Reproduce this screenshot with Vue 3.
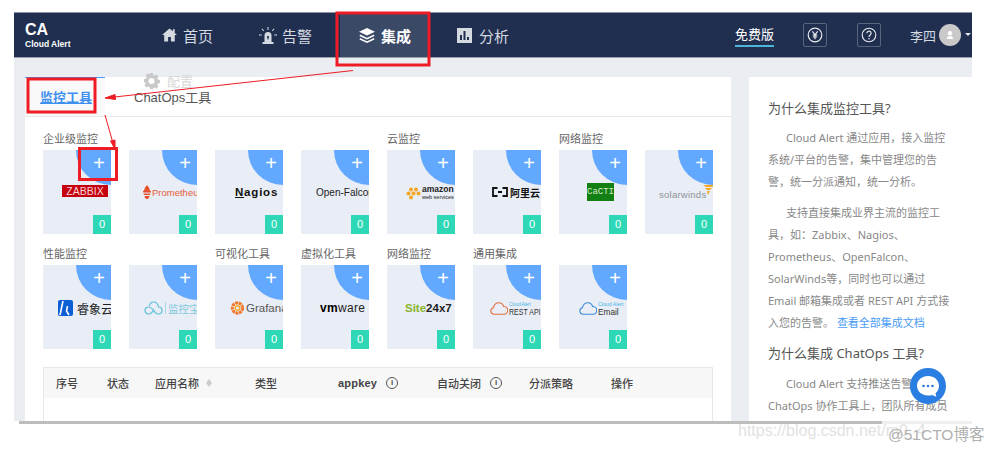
<template>
  <div class="page">
    <div class="shell">
      <header class="nav">
        <div class="brand">
          <div class="brand-ca">CA</div>
          <div class="brand-sub">Cloud Alert</div>
        </div>
        <nav class="menu">
          <a class="menu-item home">
            <svg width="15" height="14" viewBox="0 0 15 14"><path fill="#d5d9e0" d="M7.5 0.5 0 7h2.2v6.5h3.9V9h2.8v4.5h3.900V7H15L12.700 5V1.200h-1.900v2.100z"/></svg>
            首页
          </a>
          <a class="menu-item alarm">
            <svg width="18" height="17" viewBox="0 0 18 17"><path fill="#d5d9e0" d="M5.500 15V8.500a3.500 3.500 0 0 1 7 0V15zM3.500 15h11v2h-11zM8.500 0h1v3h-1zM2.500 2l.8-.6 1.800 2.300-.8.600zM15.500 2l-.8-.6-1.800 2.300.8.600zM0 7.500h2.800v1H0zM15.200 7.500H18v1h-2.800z"/><circle cx="9" cy="10" r="1.100" fill="#202f50"/><rect x="8.500" y="10" width="1" height="2.500" fill="#202f50"/></svg>
            告警
          </a>
          <a class="menu-item active">
            <svg width="16" height="15" viewBox="0 0 16 15"><path fill="#fff" d="M8 0 16 3.800 8 7.600 0 3.800z"/><path fill="none" stroke="#fff" stroke-width="1.500" d="M.8 7.200 8 10.600l7.200-3.400M.8 10.700 8 14.100l7.200-3.400"/></svg>
            集成
          </a>
          <a class="menu-item chart">
            <svg width="15" height="15" viewBox="0 0 15 15"><path fill="#d5d9e0" fill-rule="evenodd" d="M0 0h15v15H0zM3 7v5h2V7zM6.500 3v9h2V3zM10 9v3h2V9z"/></svg>
            分析
          </a>
        </nav>
        <div class="nav-right">
          <span class="plan">免费版</span>
          <span class="icon-box">
            <svg width="16" height="16" viewBox="0 0 16 16"><circle cx="8" cy="8" r="6.800" fill="none" stroke="#e8eaee" stroke-width="1.200"/><path fill="none" stroke="#e8eaee" stroke-width="1.200" d="M5.400 4.300 8 7.800l2.600-3.500M8 7.800v4.400M5.800 8.200h4.400M5.800 10h4.400"/></svg>
          </span>
          <span class="icon-box">
            <svg width="16" height="16" viewBox="0 0 16 16"><circle cx="8" cy="8" r="6.800" fill="none" stroke="#e8eaee" stroke-width="1.100"/><path fill="none" stroke="#e8eaee" stroke-width="1.200" d="M5.900 6.200a2.100 2.100 0 1 1 3.300 1.700C8.400 8.500 8 8.900 8 9.900"/><circle cx="8" cy="11.700" r=".8" fill="#e8eaee"/></svg>
          </span>
          <span class="user">李四</span>
          <span class="avatar">
            <svg width="10" height="10" viewBox="0 0 10 10"><circle cx="5" cy="3.200" r="2.200" fill="#fff"/><path fill="#fff" d="M1.800 9c0-2 1.400-3 3.200-3s3.200 1 3.200 3z"/></svg>
          </span>
          <span class="caret"></span>
        </div>
      </header>

      <main class="content">
        <section class="panel">
          <div class="tabs">
            <a class="tab tab-active">监控工具</a>
            <a class="tab">ChatOps工具</a>
          </div>
          <div class="ghost-menu">
            <svg width="17" height="16" viewBox="0 0 17 16"><path fill="#c9c9c9" fill-rule="evenodd" d="M6 0h3l.4 2 1.400.6 1.700-1.100 2 2-1.100 1.700.6 1.400 2 .4v3l-2 .4-.6 1.400 1.100 1.700-2 2-1.700-1.100-1.400.6L9 16H6l-.4-2-1.400-.6-1.700 1.100-2-2 1.100-1.700L1 9.400 0 9V6l2-.4.6-1.400-1.100-1.700 2-2 1.700 1.100L6 .6zM7.500 5a3 3 0 1 0 0 6 3 3 0 0 0 0-6z"/></svg>
            配置
          </div>

          <div v-for="(row, r) in rows" :key="r" class="group-row">
            <div v-for="group in row" :key="group.title" class="group">
              <div class="group-title">{{ group.title }}</div>
              <div class="cards">
                <div v-for="card in group.cards" :key="card" class="card">
                  <span class="corner">+</span>
                  <span class="count">0</span>

                  <div v-if="card === 'zabbix'" class="logo zabbix">ZABBIX</div>
                  <div v-else-if="card === 'prometheus'" class="logo prometheus">
                    <svg width="8" height="14" viewBox="0 0 8 14"><path fill="#e6522c" d="M4 0c.6 1.600 2.600 2.400 2.600 4.600 0 .8.400 1.400 1.400 1.400v1.500H0V6c1 0 1.400-.6 1.400-1.400C1.400 2.400 3.400 1.600 4 0zM.8 8.500h6.400v1.500H.8zM1.600 11h4.800c0 1.800-1 3-2.400 3s-2.400-1.200-2.400-3z"/></svg>
                    Prometheus
                  </div>
                  <div v-else-if="card === 'nagios'" class="logo nagios"><u>N</u>agios</div>
                  <div v-else-if="card === 'falcon'" class="logo falcon">Open-Falcon</div>
                  <div v-else-if="card === 'amazon'" class="logo amazon">
                    <svg width="15" height="15" viewBox="0 0 15 15"><g fill="#f5a623"><circle cx="5" cy="3.500" r="2"/><circle cx="10" cy="3.500" r="2"/><circle cx="2.500" cy="7.500" r="2"/><circle cx="7.500" cy="7.500" r="2"/><circle cx="12.500" cy="7.500" r="2"/><circle cx="5" cy="11.500" r="2"/></g></svg>
                    <div class="amazon-text"><b>amazon</b><small>web services</small></div>
                  </div>
                  <div v-else-if="card === 'aliyun'" class="logo aliyun">
                    <svg width="16" height="10" viewBox="0 0 16 10"><path fill="none" stroke="#111" stroke-width="1.800" d="M5.500 1H1v8h4.500M10.500 1H15v8h-4.500M6 5h4"/></svg>
                    阿里云
                  </div>
                  <div v-else-if="card === 'cacti'" class="logo cacti">CaCTI</div>
                  <div v-else-if="card === 'solarwinds'" class="logo solarwinds">
                    solarwinds
                    <svg class="solar-mark" width="12" height="11" viewBox="0 0 12 11"><path fill="#f5a623" d="M0 1h12L9 3H3zM2 4h7L7 6H4zM4 7h3L5 11z"/></svg>
                  </div>
                  <div v-else-if="card === 'ruixiang'" class="logo ruixiang">
                    <svg width="15" height="16" viewBox="0 0 15 16"><rect width="15" height="16" rx="2" fill="#0d5fd6"/><path fill="none" stroke="#fff" stroke-width="1.600" d="M5 1 3.500 8 2 15M9.500 6l-1 5 2.500 4"/></svg>
                    睿象云
                  </div>
                  <div v-else-if="card === 'jiankongbao'" class="logo jiankongbao">
                    <svg width="19" height="14" viewBox="0 0 19 14"><path fill="none" stroke="#5cc0dc" stroke-width="1.200" d="M9.500 9C8 12 6.500 13 4.500 13a3.500 3.500 0 0 1 0-7c2.500 0 3.500 1.500 5 3zm0 0c1.500 3 3 4 5 4a3.500 3.500 0 0 0 0-7c-.5-3-2-5-5-5-2.500 0-4 2-4 4"/></svg>
                    <i class="divider"></i>
                    监控宝
                  </div>
                  <div v-else-if="card === 'grafana'" class="logo grafana">
                    <svg width="15" height="16" viewBox="0 0 13 14"><circle cx="6.500" cy="7" r="4.500" fill="none" stroke="#f0762a" stroke-width="2.600" stroke-dasharray="2.500 .6"/><circle cx="6.500" cy="7" r="2" fill="none" stroke="#f5a623" stroke-width="1.200"/></svg>
                    Grafana
                  </div>
                  <div v-else-if="card === 'vmware'" class="logo vmware"><b>vm</b>ware</div>
                  <div v-else-if="card === 'site24'" class="logo site24"><span>Site</span>24x7</div>
                  <div v-else-if="card === 'rest'" class="logo cloud-logo rest">
                    <svg width="18" height="13" viewBox="0 0 18 13"><path fill="none" stroke="#e0703f" stroke-width="1.100" d="M4 12.300a3.300 3.300 0 0 1-.6-6.500C4 2.800 6.200.7 8.800.7c2.400 0 4.200 1.700 4.800 3.800a3.900 3.900 0 0 1 .4 7.800z"/></svg>
                    <div class="cloud-text"><small>Cloud Alert</small><span>REST API</span></div>
                  </div>
                  <div v-else-if="card === 'email'" class="logo cloud-logo email">
                    <svg width="18" height="13" viewBox="0 0 18 13"><path fill="none" stroke="#3d8bd8" stroke-width="1.100" d="M4 12.300a3.300 3.300 0 0 1-.6-6.500C4 2.800 6.200.7 8.800.7c2.400 0 4.200 1.700 4.800 3.800a3.900 3.900 0 0 1 .4 7.800z"/></svg>
                    <div class="cloud-text"><small>Cloud Alert</small><span>Email</span></div>
                  </div>
                </div>
              </div>
            </div>
          </div>

          <div class="table">
            <div class="table-head">
              <span class="th w-no">序号</span>
              <span class="th w-status">状态</span>
              <span class="th w-name">应用名称<i class="sort"></i></span>
              <span class="th w-type">类型</span>
              <span class="th w-key appkey">appkey<i class="info">i</i></span>
              <span class="th w-auto">自动关闭<i class="info">i</i></span>
              <span class="th w-policy">分派策略</span>
              <span class="th">操作</span>
            </div>
          </div>
        </section>

        <aside class="side">
          <h3>为什么集成监控工具?</h3>
          <p>Cloud Alert 通过应用，接入监控系统/平台的告警，集中管理您的告警，统一分派通知，统一分析。</p>
          <p>支持直接集成业界主流的监控工具，如：Zabbix、Nagios、Prometheus、OpenFalcon、SolarWinds等，同时也可以通过 Email 邮箱集成或者 REST API 方式接入您的告警。 <a>查看全部集成文档</a></p>
          <h3>为什么集成 ChatOps 工具?</h3>
          <p>Cloud Alert 支持推送告警到 ChatOps 协作工具上，团队所有成员</p>
        </aside>
      </main>
    </div>
    <div class="rule"><div class="rule-dark"></div></div>

    <!-- things drawn over the screenshot -->
    <button class="chat">
      <svg width="24" height="23" viewBox="0 0 24 23"><path fill="#fff" d="M12 1c6.200 0 11 4.200 11 9.800 0 3.300-1.300 5.800-3.500 7.500l.8 3.400-4.200-1.800c-1.300.4-2.700.6-4.100.6C5.800 20.500 1 16.300 1 10.800S5.800 1 12 1z"/><g fill="#2a7de1"><circle cx="7.500" cy="11" r="1.300"/><circle cx="12" cy="11" r="1.300"/><circle cx="16.500" cy="11" r="1.300"/></g></svg>
    </button>
    <svg class="marks" width="995" height="451" viewBox="0 0 995 451">
      <g fill="none" stroke="#ee1c25" stroke-width="3">
        <rect x="337" y="13" width="92" height="52"/>
        <rect x="28" y="79" width="67" height="33"/>
        <rect x="79.500" y="148.500" width="37" height="31"/>
      </g>
      <g stroke="#ee1c25" stroke-width="1" fill="#ee1c25">
        <path d="M353 70.500 110 97.500"/>
        <path d="M105 98 115 94.500 115.500 99.500z"/>
        <path d="M105 115 113 143"/>
        <path d="M115 149 110.500 141 115 140z"/>
      </g>
    </svg>
    <div class="watermark"><span class="wm-url">https://blog.csdn.net/m0_4</span><span class="wm-brand">@51CTO博客</span></div>
  </div>
</template>

<script setup>
// each row of the integration wall, cards are keyed to their logo below
const rows = [
  [
    { title: '企业级监控', cards: ['zabbix', 'prometheus', 'nagios', 'falcon'] },
    { title: '云监控', cards: ['amazon', 'aliyun'] },
    { title: '网络监控', cards: ['cacti', 'solarwinds'] }
  ],
  [
    { title: '性能监控', cards: ['ruixiang', 'jiankongbao'] },
    { title: '可视化工具', cards: ['grafana'] },
    { title: '虚拟化工具', cards: ['vmware'] },
    { title: '网络监控 ', cards: ['site24'] },
    { title: '通用集成', cards: ['rest', 'email'] }
  ]
]
</script>

<style>
html, body {
  background: #fff;
  overflow: hidden;
}
</style>

<style scoped>
.page {
  position: relative;
  width: 995px;
  height: 451px;
  overflow: hidden;
  background: #fff;
  font-family: "Liberation Sans", "Noto Sans CJK SC", sans-serif;
}

.shell {
  width: 958px;
  height: 409px;
  margin: 12px 0 0 14px;
  background: #eaeef3;
  overflow: hidden;
}

/* top bar */
.nav {
  display: flex;
  align-items: center;
  height: 46px;
  border-top: 1px solid #8d95a5;
  border-bottom: 1px solid #98a0ae;
  box-sizing: border-box;
  background: #202f50;
  color: #d5d9e0;
}

.brand {
  width: 148px;
  padding-left: 11px;
  box-sizing: border-box;
  color: #fff;
}

.brand-ca {
  font-size: 16px;
  font-weight: 700;
  line-height: 17px;
}

.brand-sub {
  font-size: 8.500px;
  font-weight: 700;
  line-height: 12px;
}

.menu {
  display: flex;
  align-items: stretch;
  height: 100%;
}

.menu-item {
  display: flex;
  align-items: center;
  gap: 6px;
  font-size: 15px;
  white-space: nowrap;
}

.home { width: 96px; }
.alarm { width: 80px; gap: 5px; margin-left: 1px; }
.chart { margin-left: 27px; gap: 7px; }

.active {
  justify-content: center;
  width: 90px;
  margin-left: 1px;
  background: #3a4a66;
  color: #fff;
  font-weight: 700;
}

.nav-right {
  display: flex;
  align-items: center;
  margin-left: auto;
  height: 100%;
}

.plan {
  margin-right: 29px;
  padding: 4px 0 2px;
  border-bottom: 2px solid #4db6d8;
  font-size: 13px;
  color: #fff;
  line-height: 16px;
}

.icon-box {
  display: flex;
  align-items: center;
  justify-content: center;
  width: 22px;
  height: 22px;
  margin-right: 30px;
  border: 1px solid #59647c;
  border-radius: 2px;
}

.user {
  font-size: 13px;
  margin-left: -1px;
  margin-right: 3px;
}

.avatar {
  display: flex;
  align-items: center;
  justify-content: center;
  width: 22px;
  height: 22px;
  border-radius: 50%;
  background: #c9c9c9;
}

.caret {
  width: 0;
  height: 0;
  margin: 0 1px 0 4px;
  border: 3px solid transparent;
  border-top: 3px solid #e6e8ec;
  transform: translateY(1px);
}

/* body */
.content {
  display: flex;
  gap: 18px;
  padding: 19px 0 0 11px;
}

.panel {
  position: relative;
  flex: none;
  width: 706px;
  height: 345px;
  background: #fff;
}

.tabs {
  display: flex;
  align-items: center;
  height: 39px;
  border-bottom: 1px solid #e6e8ec;
  margin-bottom: 14px;
}

.tab {
  font-size: 13px;
  color: #555;
  margin-left: 29px;
}

.tab-active {
  width: 80px;
  height: 39px;
  margin-left: 0;
  padding-left: 15px;
  box-sizing: border-box;
  line-height: 40px;
  border-top: 1px solid #4a9cf6;
  background: #f9f9f9;
  color: #3d8ff0;
  font-weight: 700;
  text-decoration: underline;
}

.ghost-menu {
  position: absolute;
  left: 119px;
  top: -6px;
  display: flex;
  align-items: center;
  gap: 6px;
  font-size: 13px;
  color: #d8d8d8;
}

.group-row {
  display: flex;
  gap: 18px;
  height: 115px;
  padding-left: 18px;
}

.group-title {
  height: 19px;
  padding-top: 1px;
  box-sizing: border-box;
  font-size: 11px;
  line-height: 14px;
  color: #666;
}

.cards {
  display: flex;
  gap: 18px;
}

.card {
  position: relative;
  display: flex;
  align-items: flex-start;
  width: 68px;
  height: 84px;
  padding-top: 33px;
  box-sizing: border-box;
  background: #e9edf5;
  overflow: hidden;
}

.corner {
  position: absolute;
  top: 0;
  right: 0;
  width: 35px;
  height: 35px;
  padding: 1px 6px 0 0;
  box-sizing: border-box;
  background: #62a8ff;
  border-bottom-left-radius: 100%;
  color: #fff;
  font-size: 20px;
  line-height: 24px;
  text-align: right;
}

.count {
  position: absolute;
  right: 0;
  bottom: 0;
  width: 18px;
  height: 19px;
  background: #2ed8b6;
  color: #fff;
  font-size: 11px;
  line-height: 19px;
  text-align: center;
}

.logo {
  flex: none;
  display: flex;
  align-items: center;
  height: 18px;
  white-space: nowrap;
}

.zabbix {
  margin: 2px 0 0 19px;
  width: 46px;
  height: 12px;
  justify-content: center;
  background: #c6000e;
  color: #f5d5d5;
  font-size: 10.500px;
}

.prometheus {
  gap: 1px;
  margin-left: 14px;
  color: #e6603c;
  font-size: 9.500px;
}

.nagios {
  margin-left: 20px;
  font-size: 11.500px;
  font-weight: 700;
  color: #111;
  letter-spacing: .8px;
}

.falcon {
  margin-left: 15px;
  font-size: 10px;
  color: #222;
}

.amazon {
  gap: 1px;
  margin: 1px 0 0 19px;
}

.amazon-text {
  display: flex;
  flex-direction: column;
  color: #222;
  line-height: 8px;
}

.amazon-text b { font-size: 8.500px; }
.amazon-text small { font-size: 5.500px; }

.aliyun {
  gap: 2px;
  margin-left: 19px;
  font-size: 10px;
  font-weight: 700;
  color: #111;
}

.cacti {
  margin: 0 0 0 28px;
  width: 27px;
  height: 18px;
  justify-content: center;
  background: #128012;
  color: #d4e8c8;
  font-size: 9px;
  font-family: "Liberation Mono", monospace;
}

.solarwinds {
  margin: 2px 0 0 14px;
  color: #8f939a;
  font-size: 9.500px;
  letter-spacing: .25px;
}

.solar-mark {
  flex: none;
  margin: -9px 0 0 -3px;
}

.ruixiang {
  gap: 4px;
  margin: 1px 0 0 15px;
  font-size: 12px;
  color: #222;
}

.jiankongbao {
  gap: 2px;
  margin: 1px 0 0 15px;
  color: #7ec8dc;
  font-size: 10.500px;
}

.divider {
  width: 1px;
  height: 12px;
  background: #a5d8e6;
}

.grafana {
  gap: 1px;
  margin: 1px 0 0 15px;
  color: #555;
  font-size: 11.500px;
}

.vmware {
  margin: 1px 0 0 19px;
  color: #222;
  font-size: 12px;
  letter-spacing: .3px;
}

.vmware b { font-weight: 700; color: #000; }

.site24 {
  margin: 1px 0 0 18px;
  font-size: 11.500px;
  font-weight: 700;
  color: #222;
}

.site24 span { color: #8ab52a; }

.cloud-logo {
  gap: 1px;
  margin: 1px 0 0 17px;
}

.email { margin-left: 20px; }

.cloud-text {
  display: flex;
  flex-direction: column;
  line-height: 9px;
  font-size: 9.500px;
  color: #333;
  transform-origin: left center;
}

.rest .cloud-text { transform: scaleX(.74); }
.email .cloud-text { transform: scaleX(.87); }

.cloud-text small {
  font-size: 6px;
  line-height: 6px;
  color: #42b4e6;
}

/* table stub */
.table {
  position: absolute;
  left: 18px;
  top: 290px;
  width: 670px;
  height: 60px;
  box-sizing: border-box;
  border: 1px solid #e6e8ec;
}

.table-head {
  display: flex;
  align-items: center;
  height: 30px;
  padding-left: 12px;
  background: #f7f7f7;
}

.th {
  flex: none;
  font-size: 11px;
  font-weight: 500;
  color: #444;
  white-space: nowrap;
  display: flex;
  align-items: center;
}

.w-no { width: 51px; }
.w-status { width: 48px; }
.w-name { width: 100px; }
.w-type { width: 83px; }
.w-key { width: 99px; }
.w-auto { width: 92px; }
.w-policy { width: 82px; }

.appkey { font-weight: 700; letter-spacing: .2px; }

.sort {
  position: relative;
  display: inline-block;
  width: 6px;
  height: 10px;
  margin-left: 7px;
}

.sort::before,
.sort::after {
  content: "";
  position: absolute;
  left: 0;
  border: 3px solid transparent;
}

.sort::before {
  top: -2px;
  border-bottom: 4px solid #ccc;
}

.sort::after {
  bottom: -2px;
  border-top: 4px solid #ccc;
}

.info {
  display: inline-block;
  width: 10px;
  height: 10px;
  margin-left: 9px;
  border: 1px solid #555;
  border-radius: 50%;
  font-size: 8px;
  font-style: normal;
  font-weight: 700;
  line-height: 10px;
  text-align: center;
}

/* right column */
.side {
  flex: none;
  width: 223px;
  height: 345px;
  padding: 20px 18px 0 19px;
  box-sizing: border-box;
  background: #fff;
  overflow: hidden;
  color: #888;
  font-family: "Noto Sans", "Noto Sans CJK SC", sans-serif;
}

.side h3 {
  margin: 0 0 8px;
  font-size: 13px;
  font-weight: 400;
  line-height: 22px;
  color: #555;
}

.side h3:not(:first-child) {
  margin: 1px 0 9px;
}

.side p {
  margin: 0 0 8.500px;
  font-size: 11px;
  line-height: 22px;
  text-indent: 18px;
}

.side a { color: #4a9cf6; }

.rule {
  width: 953px;
  height: 3px;
  margin-left: 19px;
  background: #efefef;
}

.rule-dark {
  width: 863px;
  height: 100%;
  background: #bdbdbd;
}

.chat {
  position: absolute;
  left: 910px;
  top: 368px;
  display: flex;
  align-items: center;
  justify-content: center;
  width: 36px;
  height: 36px;
  padding: 0;
  border: none;
  border-radius: 50%;
  background: #2a7de1;
}

.marks {
  position: absolute;
  left: 0;
  top: 0;
  pointer-events: none;
}

.watermark {
  position: absolute;
  left: 738px;
  top: 422px;
  white-space: nowrap;
  font-size: 16px;
  color: #e2e2e2;
}

.wm-brand {
  position: absolute;
  left: 150px;
  top: 0;
  font-size: 15.500px;
  color: #b0b0b0;
}
</style>
